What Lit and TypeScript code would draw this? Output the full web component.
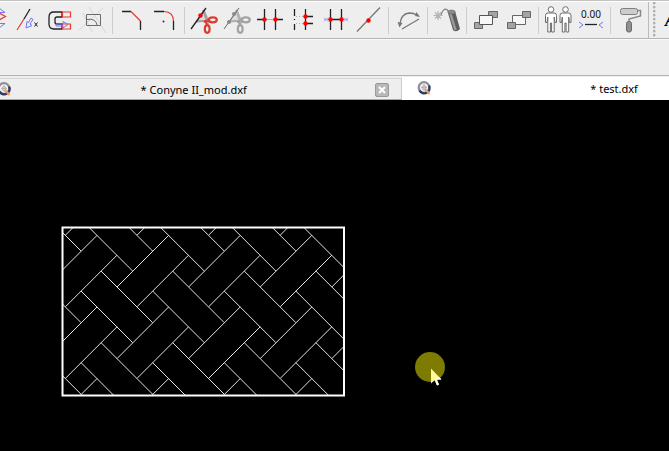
import { LitElement, html, svg, css } from "lit";
import { customElement, state } from "lit/decorators.js";
import { classMap } from "lit/directives/class-map.js";

const dot = (x: number, y: number) => svg`<circle class="red" cx=${x} cy=${y} r="2.2"/>`;

const scissors = (blade: string, handle: string) => svg`
  <path d="M17 8 L10 19 L22 20 Z" fill="#ddd" stroke=${blade} stroke-width="1.200"/>
  <path d="M16 8 L21 22 M9 19.500 L23 18.500" stroke=${blade} stroke-width="2"/>
  <ellipse cx="25.800" cy="17.800" rx="4" ry="2.500" fill="none" stroke=${handle} stroke-width="2.200"/>
  <ellipse cx="20.200" cy="27" rx="2.400" ry="3.800" fill="none" stroke=${handle} stroke-width="2.200"/>
  <path d="M17 20 L22 18 M18 18 L20 23" stroke=${handle} stroke-width="2"/>`;

const person = (x: number) => svg`
  <g transform="translate(${x} 0)" fill="#fff" stroke="#6c6c6c">
    <path d="M-3 11 H3 Q5.500 11 5.500 13.500 V20.500 H4 L3.200 15 V30 H.6 V21 H-.6 V30 H-3.200 V15 L-4 20.500 H-5.500 V13.500 Q-5.500 11 -3 11 Z"/>
    <circle cx="0" cy="7.500" r="2.800"/>
  </g>`;

type Tool = { name: string; icon: unknown };

const groups: Tool[][] = [
  [
    { name: "Flip", icon: svg`
      <path class="blue" d="M22 6 L28 10.500 H22 M22 21.500 H28 L22 26"/>
      <path class="redline" d="M22 11 L28.500 14.500 L22 18"/>` },
    { name: "Lengthen", icon: svg`
      <path class="ink" d="M20 7 L14 17"/><path class="redline" d="M14 17 L7 28"/>
      <path class="blue" d="M21 16 L23 17.500 L20 22 L22 23.500 L16 26 L17 19.500 L18.500 20.500 Z"/>
      <path class="ink thin" d="M24.500 20.500 L27.500 24.500 M27.500 20.500 L24.500 24.500"/>` },
    { name: "Stretch", icon: svg`
      <path class="ink" d="M19 10 H11 Q6 10 6 15 V22 Q6 27 11 27 H19 V22 H14 Q12 22 12 20 V17 Q12 15 14 15 H19 Z"/>
      <path class="redline" d="M19.500 10 H27.500 V15 H19.500 Z M19.500 27 H27.500 V22 H19.500 Z"/>
      <path class="blue" d="M13 22 H20 V19.500 L25 22.500 L20 26 V24 H13 Z" fill="#fff"/>` },
    { name: "Clip to rectangle", icon: svg`
      <path d="M3 28 L27 6 M13 5 L30 31 M7 11 L16 30" stroke="#d6d6d6" fill="none"/>
      <path d="M10.500 12.500 H24.500 V23.500 H10.500 Z M10.500 17.500 Q20 16 21 23" stroke="#6c6c6c" fill="none"/>` },
  ],
  [
    { name: "Bevel", icon: svg`
      <path class="ink" d="M7 9.500 H16 M25.500 19 V28"/><path class="redline" d="M16 9.500 L25.500 19"/>` },
    { name: "Round", icon: svg`
      <path class="ink" d="M6 9.500 H16 M25.500 19 V28"/><path class="redline" d="M16 9.500 Q25.500 10 25.500 19"/>
      <circle cx="15.500" cy="19.500" r="1" fill="#22b"/>` },
  ],
  [
    { name: "Divide", icon: svg`${scissors("#a0a0a0", "#dd3a30")}<path class="ink" d="M19 6 L4 27"/>${dot(13.5, 13.5)}` },
    { name: "Divide 2", icon: svg`${scissors("#b0b0b0", "#a2a2a2")}<path d="M19 6 L4 27" stroke="#666"/>
      <circle cx="14" cy="12" r="2" fill="#888"/><circle cx="9" cy="20" r="2" fill="#888"/>` },
    { name: "Break out segment", icon: svg`
      <path d="M11 17.500 H23" stroke="#aaa"/><path class="ink" d="M4 17.500 H11 M23 17.500 H30 M11.500 7 V28 M22.500 7 V28"/>
      ${dot(11.5, 17.5)}${dot(22.5, 17.5)}` },
    { name: "Break out gap", icon: svg`
      <path class="ink" d="M8.500 7 V14 M8.500 17 V18 M8.500 22 V28 M19.500 7 V28 M20 14.500 H27 M20 21.500 H27"/>
      <path d="M10 14.500 H19 M10 21.500 H19" stroke="#aaa" stroke-dasharray="1 2"/>
      ${dot(19.5, 14.5)}${dot(19.5, 21.5)}` },
    { name: "Auto trim", icon: svg`
      <path class="ink" d="M11.500 7 V28 M22.500 7 V28 M11 17.500 H23"/>
      <path class="blue pale" d="M5 15.500 L9 19.500 M9 15.500 L5 19.500 M5 17.500 H10 M25 15.500 L29 19.500 M29 15.500 L25 19.500 M24 17.500 H29"/>
      ${dot(11.5, 17.5)}${dot(22.5, 17.5)}` },
    { name: "Split", icon: svg`<path d="M5 29.500 L28 5.500" stroke="#777" stroke-width="1.300"/>${dot(16.5, 18.5)}` },
  ],
  [
    { name: "Reverse", icon: svg`
      <path d="M9 22 Q10 12 18 11 Q23 11 26 13 M11 27 L28 17" stroke="#777" stroke-width="1.300" fill="none"/>
      <path d="M6.500 20 L11.500 21 L8.500 25.500 Z M24 14 L25.500 10 L29 15 Z" fill="#777"/>` },
  ],
  [
    { name: "Explode", icon: svg`
      <path d="M8 9 V18 M3.500 13.500 H12.500 M5 10.500 L11 16.500 M11 10.500 L5 16.500" stroke="#b5b5b5" stroke-width="1.200"/>
      <path d="M11 13 Q13 6 17 7.500 L19.500 11" stroke="#888" stroke-width="1.300" fill="none"/>
      <path d="M18 11 L23 28 Q26 31 30 27 L25 9 Z" fill="#5e5e5e"/>
      <path d="M20.500 12 L25.500 28" stroke="#9a9a9a" stroke-width="2.500"/>
      <ellipse cx="21.500" cy="10" rx="3.700" ry="2" fill="#8c8c8c" stroke="#666" stroke-width=".6"/>` },
  ],
  [
    { name: "Bring to front", icon: svg`
      <path d="M5.500 20.500 H13.500 V26.500 H5.500 Z M19.500 9.500 H28.500 V15.500 H19.500 Z" fill="#a4a4a4" stroke="#666"/>
      <path d="M10.500 13.500 H23.500 V22.500 H10.500 Z" fill="#f8f8f8" stroke="#555"/>` },
    { name: "Send to back", icon: svg`
      <path d="M10.500 13.500 H23.500 V22.500 H10.500 Z" fill="#f8f8f8" stroke="#666"/>
      <path d="M5.500 20.500 H13.500 V26.500 H5.500 Z M20.500 9.500 H28.500 V15.500 H20.500 Z" fill="#a4a4a4" stroke="#666"/>` },
  ],
  [
    { name: "Detect duplicates", icon: svg`${person(10)}${person(24.5)}` },
    { name: "Detect zero-length", icon: svg`
      <text class="zero" x="17" y="16" text-anchor="middle">0.00</text>
      <path class="blue" d="M5 20 L9 23 L5 26 M29 20 L25 23 L29 26"/><path class="ink" d="M11 22.500 H23"/>` },
  ],
  [
    { name: "Apply properties", icon: svg`
      <path d="M24 8.500 H27.500 V14 L16 17 V20" stroke="#888" stroke-width="1.500" fill="none"/>
      <rect x="7.500" y="6.500" width="17" height="6" rx="2" fill="#ccc" stroke="#808080"/>
      <rect x="13.500" y="19.500" width="5" height="10.500" rx="2" fill="#909090" stroke="#6c6c6c"/>` },
  ],
];

const PERIOD = 71.6;
/* One stroke of each family in the herringbone cell, as x1, y1, x2, y2. */
const strokes = [
  [65.5, 306.7, 117, 255.2],
  [117, 287, 168.7, 235.3],
  [101, 271, 152.6, 322.6],
  [81, 291, 132.8, 342.8],
];
const hatch = (): string => {
  let d = "";
  for (const [x1, y1, x2, y2] of strokes)
    for (let i = -2; i <= 4; i++)
      for (let j = -2; j <= 2; j++)
        d += `M${x1 + i * PERIOD} ${y1 + j * PERIOD - 100}L${x2 + i * PERIOD} ${y2 + j * PERIOD - 100}`;
  return d;
};

const magnifier = html`<svg class="lens" viewBox="0 0 16 16" aria-hidden="true">
  <circle cx="8" cy="6.500" r="5.300" fill="#f4f4f4" stroke="#8f8f96" stroke-width="2.300"/>
  <path d="M13 4.500 A5.300 5.300 0 0 1 3.500 9.500" fill="none" stroke="#2b3a66" stroke-width="2.300"/>
  <path d="M8 3 V10 M5 6.500 H11" stroke="#c8b0b0"/><circle cx="8" cy="6.500" r="2" fill="none" stroke="#b0b0bc"/>
  <path d="M9 8 L13.500 13" stroke="#f0a060" stroke-width="2.200"/></svg>`;

@customElement("app-root")
export class AppRoot extends LitElement {
  @state() private active = 1;
  private files = ["Conyne II_mod.dxf", "test.dxf"];

  static styles = css`
    :host {
      display: flex;
      flex-direction: column;
      min-height: 100vh;
      overflow: hidden;
      background: #eee;
      color: #000;
      font: 11px/16px "Noto Sans", "Open Sans", sans-serif;
    }
    button {
      border: 0;
      padding: 0;
      background: none;
      color: inherit;
      font: inherit;
      display: block;
    }
    .tools {
      display: flex;
      height: 36px;
      margin-left: -23px;
      border-top: 1px solid #c4c4c4;
      border-bottom: 1px solid #b4b4b4;
      box-shadow: inset 0 1px #fff, 0 1px #fafafa;
      padding-top: 1px;
    }
    .group { display: flex; flex: none; }
    .group + .group::before {
      content: "";
      width: 1px;
      margin: 5px 2px 4px 3px;
      background: #ccc;
    }
    .tool { width: 33px; height: 36px; flex: none; }
    .tool svg { display: block; width: 33px; height: 36px; }
    .grip {
      flex: none;
      width: 16px;
      margin-left: 2px;
      border-left: 1px solid #bbb;
      background: radial-gradient(circle at 1px 1px, #b0b0b0 1px, transparent 2px) 4px 4px / 14px 4px repeat-y;
    }
    .letter {
      flex: none;
      font: italic bold 18px/36px "Liberation Serif", serif;
    }
    .options {
      height: 36px;
      border-bottom: 1px solid #b4b4b4;
    }
    .ink { stroke: #222; fill: none; stroke-width: 1.3; }
    .thin { stroke-width: 1; }
    .redline { stroke: #e8392e; fill: none; stroke-width: 1.2; }
    .red { fill: #f00; }
    .blue { stroke: #7476ee; fill: none; }
    .pale { stroke: #a5a7f4; }
    .zero { font-size: 10px; fill: #111; }
    .tabs {
      display: flex;
      height: 24px;
      margin-left: -18px;
      box-sizing: border-box;
      padding-top: 1px;
    }
    .tab {
      flex: 0 0 calc(60vw + 19px);
      box-sizing: border-box;
      display: flex;
      align-items: center;
      gap: 8px;
      padding: 2px 12px 0 14px;
      margin-top: 1px;
      border-top: 1px solid #d4d4d4;
      border-right: 1px solid #ccc;
      border-bottom: 1px solid #a8a8a8;
    }
    .tab.active {
      margin-top: 0;
      background: #fff;
      border-color: #fff;
      padding-top: 0;
    }
    .name { flex: 1; text-align: center; font-size: 11px; }
    .lens { width: 16px; height: 16px; flex: none; }
    .close {
      width: 14px;
      height: 14px;
      box-sizing: border-box;
      border: 1px solid #999;
      border-radius: 2px;
      background: #b8b8b8;
    }
    .close svg { display: block; width: 12px; height: 12px; }
    .canvas { flex: 1; display: flex; background: #000; min-height: 320px; }
    .canvas svg { flex: 1; width: 100%; overflow: hidden; }
  `;

  render() {
    return html`
      <div class="tools" role="toolbar" aria-label="Modify">
        ${groups.map((g) => html`<div class="group">${g.map((t) => html`
          <button class="tool" aria-label=${t.name}><svg viewBox="0 0 33 36" fill="none">${t.icon}</svg></button>`)}</div>`)}
        <div class="grip"></div>
        <button class="letter" aria-label="Text">A</button>
      </div>
      <div class="options"></div>
      <div class="tabs">
        ${this.files.map((f, i) => html`
          <div class=${classMap({ tab: true, active: i === this.active })}>
            ${magnifier}
            <button class="name" @click=${() => (this.active = i)}>* ${f}</button>
            <button class="close" aria-label="Close ${f}"><svg viewBox="0 0 12 12">
              <path d="M3 3 L9 9 M9 3 L3 9" stroke="#fff" stroke-width="2"/></svg></button>
          </div>`)}
      </div>
      <main class="canvas">
        <svg aria-label="Herringbone drawing">
          <clipPath id="frame"><rect x="62" y="127" width="282" height="169"/></clipPath>
          <path d=${hatch()} clip-path="url(#frame)" stroke="#e4e4e4" fill="none"/>
          <rect x="62.500" y="127.500" width="281.500" height="168" fill="none" stroke="#fff" stroke-width="2"/>
          <circle cx="430" cy="267" r="15" fill="#7d7b00"/>
          <path d="M431 268.500 V283.500 L434.500 280 L437 285.500 L439 284.500 L436.500 279.500 H441.500 Z" fill="#fffb9c"/>
          <path d="M435 280 L437 285.500 L439 284.500 L437 279.500 H441.500 L439 277 Z" fill="#fff"/>
        </svg>
      </main>`;
  }
}
